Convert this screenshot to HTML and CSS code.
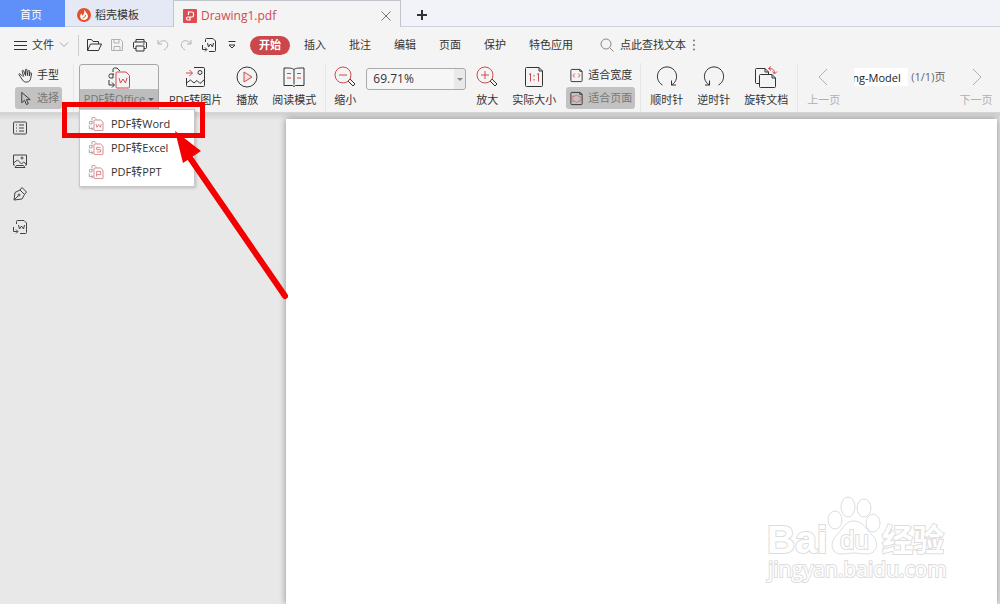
FILE: index.html
```
<!DOCTYPE html>
<html lang="zh-CN">
<head>
  <meta charset="UTF-8" />
  <meta name="viewport" content="width=device-width, initial-scale=1.0" />
  <title>Drawing1.pdf</title>
  <link rel="stylesheet" href="styles.css">
</head>
<body>
  <!-- shared icons -->
  <svg class="defs" aria-hidden="true">
    <symbol id="doc-w" viewBox="0 0 16 16">
      <path d="M4.500 5V2.500a1 1 0 0 1 1-1H12L14.500 4v9.500a1 1 0 0 1-1 1H8M1.500 8v4.500h4M4 10.500l2 2-2 2" />
      <path d="M6.500 6l1 4 2-3 2 3 1-4" />
    </symbol>
    <symbol id="convert" viewBox="0 0 24 22">
      <path d="M6 5V2.500A1.500 1.500 0 0 1 7.500 1H10l3 3M7 7H3.500A1.500 1.500 0 0 0 2 8.500v1A1.500 1.500 0 0 0 3.500 11H6V7M2 13v5h5M5 15.500L7.500 18 5 20.500" />
      <path class="red" d="M9 6a1 1 0 0 1 1-1h9l3.500 3.500V20a1 1 0 0 1-1 1H10a1 1 0 0 1-1-1z" />
    </symbol>
  </svg>

  <header>
    <nav class="tabs">
      <a class="tab tab-home" href="#">首页</a>
      <a class="tab tab-docer" href="#">
        <svg class="logo" viewBox="0 0 14 14"><circle cx="7" cy="7" r="7" fill="#e4502c" /><path d="M7 1.500c1 2 4 4 4 7-.2 2-2 3.500-4 3.500s-3.500-1-3.800-3c-.2-1.500.3-2.500 1.300-3.500.2 1 .5 1.800 1.200 2C7.500 5.500 7.500 3.500 7 1.500z" fill="#fff" /><path d="M5.500 10C7.500 10 8.500 8.500 8.500 7" stroke="#e4502c" fill="none" /></svg>
        稻壳模板
      </a>
      <div class="tab tab-file">
        <svg class="logo" viewBox="0 0 14 14"><rect width="14" height="14" rx="1" fill="#dc4c51" /><path d="M5.500 6V3H9a1.500 1.500 0 0 1 1.500 1.500v2A1.500 1.500 0 0 1 9 8H5a1.500 1.500 0 0 0 0 3h2V8" stroke="#fff" stroke-width="1.200" fill="none" /></svg>
        <span>Drawing1.pdf</span>
        <button class="close" aria-label="关闭"><svg viewBox="0 0 10 10"><path d="M.5.5l9 9M9.500.5l-9 9" /></svg></button>
      </div>
      <button class="new-tab" aria-label="新建"><svg viewBox="0 0 12 12"><path d="M6 1v10M1 6h10" /></svg></button>
    </nav>

    <div class="menubar">
      <button class="file-menu">
        <svg class="burger" viewBox="0 0 13 11"><path d="M0 1.500h13M0 5.500h13M0 9.500h13" /></svg>
        文件
        <svg class="chevron" viewBox="0 0 10 6"><path d="M1 .5l4 4 4-4" /></svg>
      </button>
      <div class="quick">
        <button aria-label="打开"><svg viewBox="0 0 16 16"><path d="M1.500 13.500v-11h4l1.500 2h5.500V7M1.500 13.500L4.500 7h11l-3 6.500z" /></svg></button>
        <button class="off" aria-label="保存"><svg viewBox="0 0 16 16"><path d="M2.500 2.500h9l2 2v9h-11zM5 2.500V6h5V2.500M5 13.500v-4h6v4" /></svg></button>
        <button aria-label="打印"><svg viewBox="0 0 16 16"><path d="M4 5V2.500h8V5M4 11.500H2.500a1 1 0 0 1-1-1V6a1 1 0 0 1 1-1h11a1 1 0 0 1 1 1v4.500a1 1 0 0 1-1 1H12M4 9h8v5H4zM11 7h1.500" /></svg></button>
        <button class="off" aria-label="撤销"><svg viewBox="0 0 16 16"><path d="M3 3v4h4M3.500 6.500C6 3.500 9 3 11 4.500c3 2.500 2 6-2 8.500" /></svg></button>
        <button class="off" aria-label="恢复"><svg viewBox="0 0 16 16"><path d="M13 3v4H9M12.500 6.500C10 3.500 7 3 5 4.500 2 7 3 10.500 7 13" /></svg></button>
        <button aria-label="转为Word"><svg viewBox="0 0 16 16"><use href="#doc-w" /></svg></button>
        <button aria-label="更多"><svg viewBox="0 0 16 16"><path d="M4.500 4.500h7M5 8l3 3 3-3z" /></svg></button>
      </div>
      <nav class="menus">
        <button class="active">开始</button>
        <button>插入</button>
        <button>批注</button>
        <button>编辑</button>
        <button>页面</button>
        <button>保护</button>
        <button>特色应用</button>
      </nav>
      <label class="search">
        <svg viewBox="0 0 14 14"><circle cx="6" cy="6" r="5" /><path d="M9.500 9.500l4 4" /></svg>
        <input type="text" placeholder="点此查找文本" aria-label="点此查找文本" />
      </label>
      <button class="dots" aria-label="选项"><svg viewBox="0 0 4 12"><circle cx="2" cy="1.500" r="1" /><circle cx="2" cy="6" r="1" /><circle cx="2" cy="10.500" r="1" /></svg></button>
    </div>

    <div class="ribbon">
      <div class="group group-mode">
        <div class="stack">
          <button class="small"><svg viewBox="0 0 16 16"><path d="M5 9L2.500 6.500c-1-1-2 0-1.200 1L5 13c1 1.500 2 2 4 2 3 0 4-1.500 4.500-4l1-5c.2-1-1.200-1.500-1.600-.3L12 8.500l.4-5c0-1.200-1.500-1.200-1.700 0L10 8l-.5-6c-.2-1.200-1.600-1-1.600.2L8 8 6 3c-.5-1-1.900-.6-1.500.6L6 9" /></svg>手型</button>
          <button class="small pressed"><svg viewBox="0 0 16 16"><path d="M4 1.500v11l3-2.500 2 4.500 2-1-2-4.300h4z" /></svg>选择</button>
        </div>
      </div>

      <div class="group group-convert">
        <div class="dropdown">
          <button class="office">
            <span class="office-icon"><svg viewBox="0 0 24 22"><use href="#convert" /><path class="red" d="M12 11l1.500 5 2.500-4 2.500 4 1.500-5" /></svg></span>
            <span class="office-label">PDF转Office<i class="caret"></i></span>
          </button>
          <div class="dropdown-list">
            <button><svg viewBox="0 0 24 22"><use href="#convert" /><path class="red" d="M12 11l1.500 5 2.500-4 2.500 4 1.500-5" /></svg>PDF转Word</button>
            <button><svg viewBox="0 0 24 22"><use href="#convert" /><path class="red" d="M19 10h-6v3.500h6V17h-6" /></svg>PDF转Excel</button>
            <button><svg viewBox="0 0 24 22"><use href="#convert" /><path class="red" d="M13 18v-8h6v5h-6" /></svg>PDF转PPT</button>
          </div>
        </div>
        <button class="tool"><svg viewBox="0 0 22 22"><path d="M9 1.500h9.500a1 1 0 0 1 1 1v17a1 1 0 0 1-1 1h-16a1 1 0 0 1-1-1V12M1.500 17l4-3 3.500 3 3-2.500 3 3 4.500-4" /><circle cx="15" cy="6.500" r="2" /><path class="red" d="M1 7h6M4.500 4l3 3-3 3" /></svg>PDF转图片</button>
        <button class="tool"><svg viewBox="0 0 22 22"><circle cx="11" cy="11" r="10" /><path class="red tint" d="M8 6l8 5-8 5z" /></svg>播放</button>
        <button class="tool"><svg viewBox="0 0 22 22"><path d="M11 3.500C9 2 7 2 1 2v17.500h8.500L11 20.500l1.500-1H21V2c-6 0-8 0-10 1.500v15" /><path class="red" d="M4 7.500h4M4 12h4M14 7.500h4M14 12h4" /></svg>阅读模式</button>
      </div>

      <div class="group group-zoom">
        <button class="tool"><svg viewBox="0 0 22 22"><path d="M14 15l2-2 5 5-2 2z" /><circle class="red" cx="9" cy="9" r="8" /><path class="red" d="M5 9h8" /></svg>缩小</button>
        <div class="zoom-box">
          <select aria-label="显示比例">
            <option>69.71%</option>
            <option>100%</option>
          </select>
        </div>
        <button class="tool"><svg viewBox="0 0 22 22"><path d="M14 15l2-2 5 5-2 2z" /><circle class="red" cx="9" cy="9" r="8" /><path class="red" d="M5 9h8M9 5v8" /></svg>放大</button>
        <button class="tool actual"><svg viewBox="0 0 22 22"><path d="M2.500 2.500a1 1 0 0 1 1-1H16L19.500 5v14.500a1 1 0 0 1-1 1h-15a1 1 0 0 1-1-1zM16 1.500V5h3.500" /><path class="red" d="M6 8.500l1.500-1v8M14 8.500l1.500-1v8M11 9v1.500M11 13v1.500" /></svg>实际大小</button>
        <div class="stack">
          <button class="small"><svg viewBox="0 0 16 16"><path d="M2 2.500a1 1 0 0 1 1-1h8.500l2.500 2v10a1 1 0 0 1-1 1H3a1 1 0 0 1-1-1zM11.500 1.500v2H14" /><path class="red" d="M6 6L4.500 8 6 10M10 6l1.500 2L10 10" /></svg>适合宽度</button>
          <button class="small pressed"><svg viewBox="0 0 16 16"><path d="M2 2.500a1 1 0 0 1 1-1h8.500l2.500 2v10a1 1 0 0 1-1 1H3a1 1 0 0 1-1-1zM11.500 1.500v2H14" /><path class="red thin" d="M8 4l1.500 1.500H12V7l1 1-1 1v2H9.500L8 12.500 6.500 11H4V9L3 8l1-1V5.500h2.500z" /></svg>适合页面</button>
        </div>
      </div>

      <div class="group group-rotate">
        <button class="tool"><svg viewBox="0 0 22 22"><path d="M6.500 19A9.600 9.600 0 1 1 15.500 19M15.500 14.500V19H20" /></svg>顺时针</button>
        <button class="tool"><svg viewBox="0 0 22 22"><path d="M15.500 19A9.600 9.600 0 1 0 6.500 19M6.500 14.500V19H2" /></svg>逆时针</button>
        <button class="tool"><svg viewBox="0 0 22 22"><path d="M4.500 17.500H1.500a1 1 0 0 1-1-1v-13a1 1 0 0 1 1-1H10l3.500 3.500v2M10 2.500V6h3.500M4.500 9.500a1 1 0 0 1 1-1H17l3.500 3.500v8.500a1 1 0 0 1-1 1h-14a1 1 0 0 1-1-1zM17 8.500V12h3.500" /><path class="red" d="M16 .5l-2.500 2 2.500 2M14 2.500c3.500 0 5.500 1 5.500 5M17.500 5.500l2 2.500 2.500-2.500" /></svg>旋转文档</button>
      </div>

      <div class="group group-pager">
        <button class="tool off"><svg viewBox="0 0 22 22"><path d="M14 3L6 11l8 8" /></svg>上一页</button>
        <div class="pager">
          <input type="text" value="ng-Model" aria-label="页码" />
          <span>(1/1)页</span>
        </div>
        <button class="tool off"><svg viewBox="0 0 22 22"><path d="M8 3l8 8-8 8" /></svg>下一页</button>
      </div>
    </div>
  </header>

  <main>
    <aside>
      <button aria-label="目录"><svg viewBox="0 0 16 16"><rect x="1.500" y="2" width="13" height="12" rx="1" /><path d="M4 5h1M7 5h5M4 8h1M7 8h5M4 11h1M7 11h5" /></svg></button>
      <button aria-label="缩略图"><svg viewBox="0 0 16 16"><path d="M3 12H1.500V2h13v10H13M1.500 10l4-3 4 4 2-2 3 2M3 14.500l1.500-2h7l1.500 2z" /><circle cx="10" cy="5" r="1" /></svg></button>
      <button aria-label="签名"><svg viewBox="0 0 16 16"><path d="M2 14l1-7.500L8 4l4.500 4.500L10 13zM2 14l4-4M8 4l2-2.500L14.500 6l-2 2.500" /><circle cx="7" cy="9" r="1" /></svg></button>
      <button aria-label="转为Word"><svg viewBox="0 0 16 16"><use href="#doc-w" /></svg></button>
    </aside>
    <section class="page"></section>
  </main>

  <svg class="watermark" viewBox="0 0 186 92" aria-label="Baidu经验">
    <g class="paw">
      <ellipse cx="70" cy="24" rx="7" ry="9" />
      <ellipse cx="83" cy="11" rx="7" ry="10" />
      <ellipse cx="99" cy="12" rx="7" ry="9" />
      <ellipse cx="108" cy="27" rx="7" ry="9" />
      <path d="M89 25c-9 0-11 8-17 14-8 7-6 19 4 19 5 0 8-1 13-1s8 1 13 1c10 0 13-12 5-19-6-6-9-14-18-14z" />
    </g>
    <text class="wm-bai" x="2" y="57">Bai</text>
    <text class="wm-du" x="75" y="53">du</text>
    <text class="wm-cn" x="117" y="55">经验</text>
    <text class="wm-url" x="3" y="81">jingyan.baidu.com</text>
  </svg>

  <div class="mark-box"></div>
  <svg class="mark-arrow" viewBox="0 0 120 174" aria-hidden="true">
    <path d="M20 28l95 138" stroke="#f40000" stroke-width="6" stroke-linecap="round" />
    <path d="M5 1l26 20-18 12z" fill="#f40000" />
  </svg>
</body>
</html>
```

FILE: styles.css
```
* {
  box-sizing: border-box;
}
body {
  margin: 0;
  min-height: 100vh;
  display: flex;
  flex-direction: column;
  position: relative;
  overflow: hidden;
  background: #e8e8e8;
  color: #333;
  font: 11px/16px "Open Sans", "Noto Sans CJK SC", sans-serif;
}
button, input, select {
  font: inherit;
  color: inherit;
  background: none;
  border: 0;
  padding: 0;
  margin: 0;
}
button {
  white-space: nowrap;
  cursor: pointer;
}
a {
  color: inherit;
  text-decoration: none;
}
svg {
  display: block;
  flex: none;
  fill: none;
  stroke: currentColor;
  overflow: visible;
}
.defs {
  position: absolute;
  width: 0;
  height: 0;
}
.red {
  stroke: #cf4a50;
}
.tint {
  fill: #fbdcdc;
}
.thin {
  stroke-width: .6;
}
.off {
  color: #b0b0b0;
}

/* tabs */
.tabs {
  display: flex;
  height: 27px;
  background: #f1f3f9;
  box-shadow: inset 0 -1px #ced2dd;
}
.tab {
  display: flex;
  align-items: center;
  gap: 4px;
  padding-top: 3px;
}
.tab-home {
  width: 65px;
  padding-right: 3px;
  justify-content: center;
  background: #5f8ff8;
  color: #fff;
}
.tab-docer {
  width: 108px;
  padding-left: 12px;
  background: #e5e9f6;
  border-bottom: 1px solid #ced2dd;
}
.tab-file {
  width: 228px;
  padding: 3px 9px 0;
  background: #f4f4f4;
  border: 1px solid #c3c5cc;
  border-bottom: 0;
  color: #cf4a50;
  font-size: 12px;
}
.logo {
  width: 14px;
  height: 14px;
  stroke: none;
}
.close {
  margin-left: auto;
  color: #777;
}
.close svg {
  width: 10px;
  height: 10px;
}
.new-tab {
  padding: 3px 15px 0;
}
.new-tab svg {
  width: 12px;
  height: 12px;
  stroke-width: 2;
}

/* menu bar */
.menubar {
  display: flex;
  align-items: center;
  height: 36px;
  padding-left: 14px;
  background: #f4f4f4;
}
.file-menu {
  display: flex;
  align-items: center;
  gap: 5px;
  height: 21px;
  padding-right: 9px;
  border-right: 1px solid #ccc;
}
.burger {
  width: 13px;
  height: 11px;
}
.chevron {
  width: 10px;
  height: 6px;
  color: #aaa;
}
.quick {
  display: flex;
  gap: 7px;
  padding: 0 10px 0 7px;
}
.quick svg, aside svg {
  width: 16px;
  height: 16px;
}
.menus {
  display: flex;
  gap: 5px;
}
.menus button {
  height: 19px;
  padding: 0 9px;
}
.menus .active {
  border-radius: 10px;
  background: #cb474b;
  color: #fff;
  font-weight: bold;
}
.search {
  display: flex;
  align-items: center;
  gap: 6px;
  margin-left: 18px;
}
.search svg {
  width: 14px;
  height: 14px;
  color: #888;
}
.search input {
  width: 68px;
  outline: 0;
}
.search input::placeholder {
  color: #333;
}
.dots {
  padding-left: 4px;
}
.dots svg {
  width: 4px;
  height: 12px;
  fill: #777;
  stroke: none;
}

/* ribbon */
.ribbon {
  display: flex;
  height: 50px;
  background: #f4f4f4;
  border-bottom: 1px solid #d6d6d6;
}
.group {
  display: flex;
  gap: 14px;
  padding: 1px 10px 3px 9px;
  box-shadow: inset -1px 0 #e6e6e6;
}
.group-mode {
  padding: 1px 12px 3px 15px;
}
.group-convert {
  padding-left: 5px;
}
.group-zoom {
  gap: 10px;
  padding-left: 8px;
  padding-right: 6px;
}
.group-pager {
  flex: 1;
  justify-content: space-between;
  padding-right: 8px;
  box-shadow: none;
}
.tool {
  display: flex;
  flex-direction: column;
  align-items: center;
  gap: 4px;
  padding-top: 2px;
}
.tool svg {
  width: 22px;
  height: 22px;
}
.actual {
  margin-left: 4px;
}
.stack {
  display: flex;
  flex-direction: column;
  gap: 1px;
}
.small {
  display: flex;
  align-items: center;
  gap: 4px;
  height: 22px;
  padding: 0 3px;
  border-radius: 3px;
}
.small svg {
  width: 15px;
  height: 15px;
}
.pressed {
  background: #c2c2c2;
  color: #777;
}
.pressed svg {
  color: #333;
}
.dropdown {
  position: relative;
  margin-right: -4px;
}
.office {
  display: flex;
  flex-direction: column;
  width: 80px;
  height: 46px;
  border: 1px solid #a6a6a6;
  border-radius: 3px 3px 0 0;
  overflow: hidden;
}
.office-icon {
  display: flex;
  justify-content: center;
  width: 100%;
  height: 25px;
  padding-top: 2px;
}
.office-icon svg {
  width: 24px;
  height: 22px;
}
.office-label {
  display: flex;
  align-items: center;
  justify-content: center;
  gap: 3px;
  width: 100%;
  height: 20px;
  background: #bdbdbd;
  color: #777;
}
.caret {
  border: 3px solid transparent;
  border-top-color: #666;
  border-bottom: 0;
}
.dropdown-list {
  position: absolute;
  top: 45px;
  left: 0;
  z-index: 2;
  width: 116px;
  padding: 2px 0;
  background: #fff;
  border: 1px solid #c8c8c8;
  box-shadow: 1px 1px 3px rgba(0,0,0,0.2);
}
.dropdown-list button {
  display: flex;
  align-items: center;
  gap: 7px;
  width: 100%;
  height: 24px;
  padding-left: 8px;
}
.dropdown-list svg {
  width: 16px;
  height: 16px;
  color: #777;
}
.zoom-box {
  position: relative;
  width: 100px;
  height: 22px;
  margin-top: 4px;
}
.zoom-box select {
  appearance: none;
  width: 100%;
  height: 100%;
  padding-left: 6px;
  border: 1px solid #aaa;
  border-radius: 3px;
  background: linear-gradient(to right, #f6f6f6 87px, #e9e9e9 87px);
  font-size: 12px;
}
.zoom-box::after {
  content: "";
  position: absolute;
  right: 3px;
  top: 10px;
  border: 3px solid transparent;
  border-top-color: #888;
  border-bottom: 0;
  pointer-events: none;
}
.pager {
  display: flex;
  align-items: center;
  gap: 3px;
  height: 20px;
  margin-top: 3px;
  color: #666;
  white-space: nowrap;
}
.pager input {
  width: 54px;
  height: 18px;
  background: #fff;
  color: #222;
  text-indent: -2px;
}

/* workspace */
main {
  flex: 1;
  display: flex;
  background: linear-gradient(#d0d0d0, #e8e8e8 7px);
}
aside {
  display: flex;
  flex-direction: column;
  gap: 17px;
  width: 286px;
  padding: 7px 12px;
  color: #444;
}
aside button {
  width: 16px;
  height: 16px;
}
.page {
  flex: 1;
  margin: 6px 3px 0 0;
  background: #fff;
  box-shadow: 0 0 7px rgba(0,0,0,0.4);
}

.watermark {
  position: absolute;
  right: 49px;
  bottom: 16px;
  width: 186px;
  height: 92px;
  fill: #fff;
  stroke: #ddd;
}
.watermark text {
  paint-order: stroke;
  stroke-width: 2;
  font-family: "Liberation Sans", "Noto Sans CJK SC", sans-serif;
  font-weight: bold;
}
.wm-bai {
  font-size: 39px;
}
.watermark .wm-du {
  font-size: 26px;
  font-weight: normal;
}
.wm-cn {
  font-size: 31px;
}
.watermark .wm-url {
  font-family: "Open Sans", sans-serif;
  font-size: 21px;
  font-weight: normal;
}

/* callout */
.mark-box {
  position: absolute;
  left: 62px;
  top: 102px;
  z-index: 3;
  width: 143px;
  height: 36px;
  border: 5px solid #f40000;
}
.mark-arrow {
  position: absolute;
  left: 170px;
  top: 130px;
  z-index: 3;
  width: 120px;
  height: 174px;
  stroke: none;
}
```
